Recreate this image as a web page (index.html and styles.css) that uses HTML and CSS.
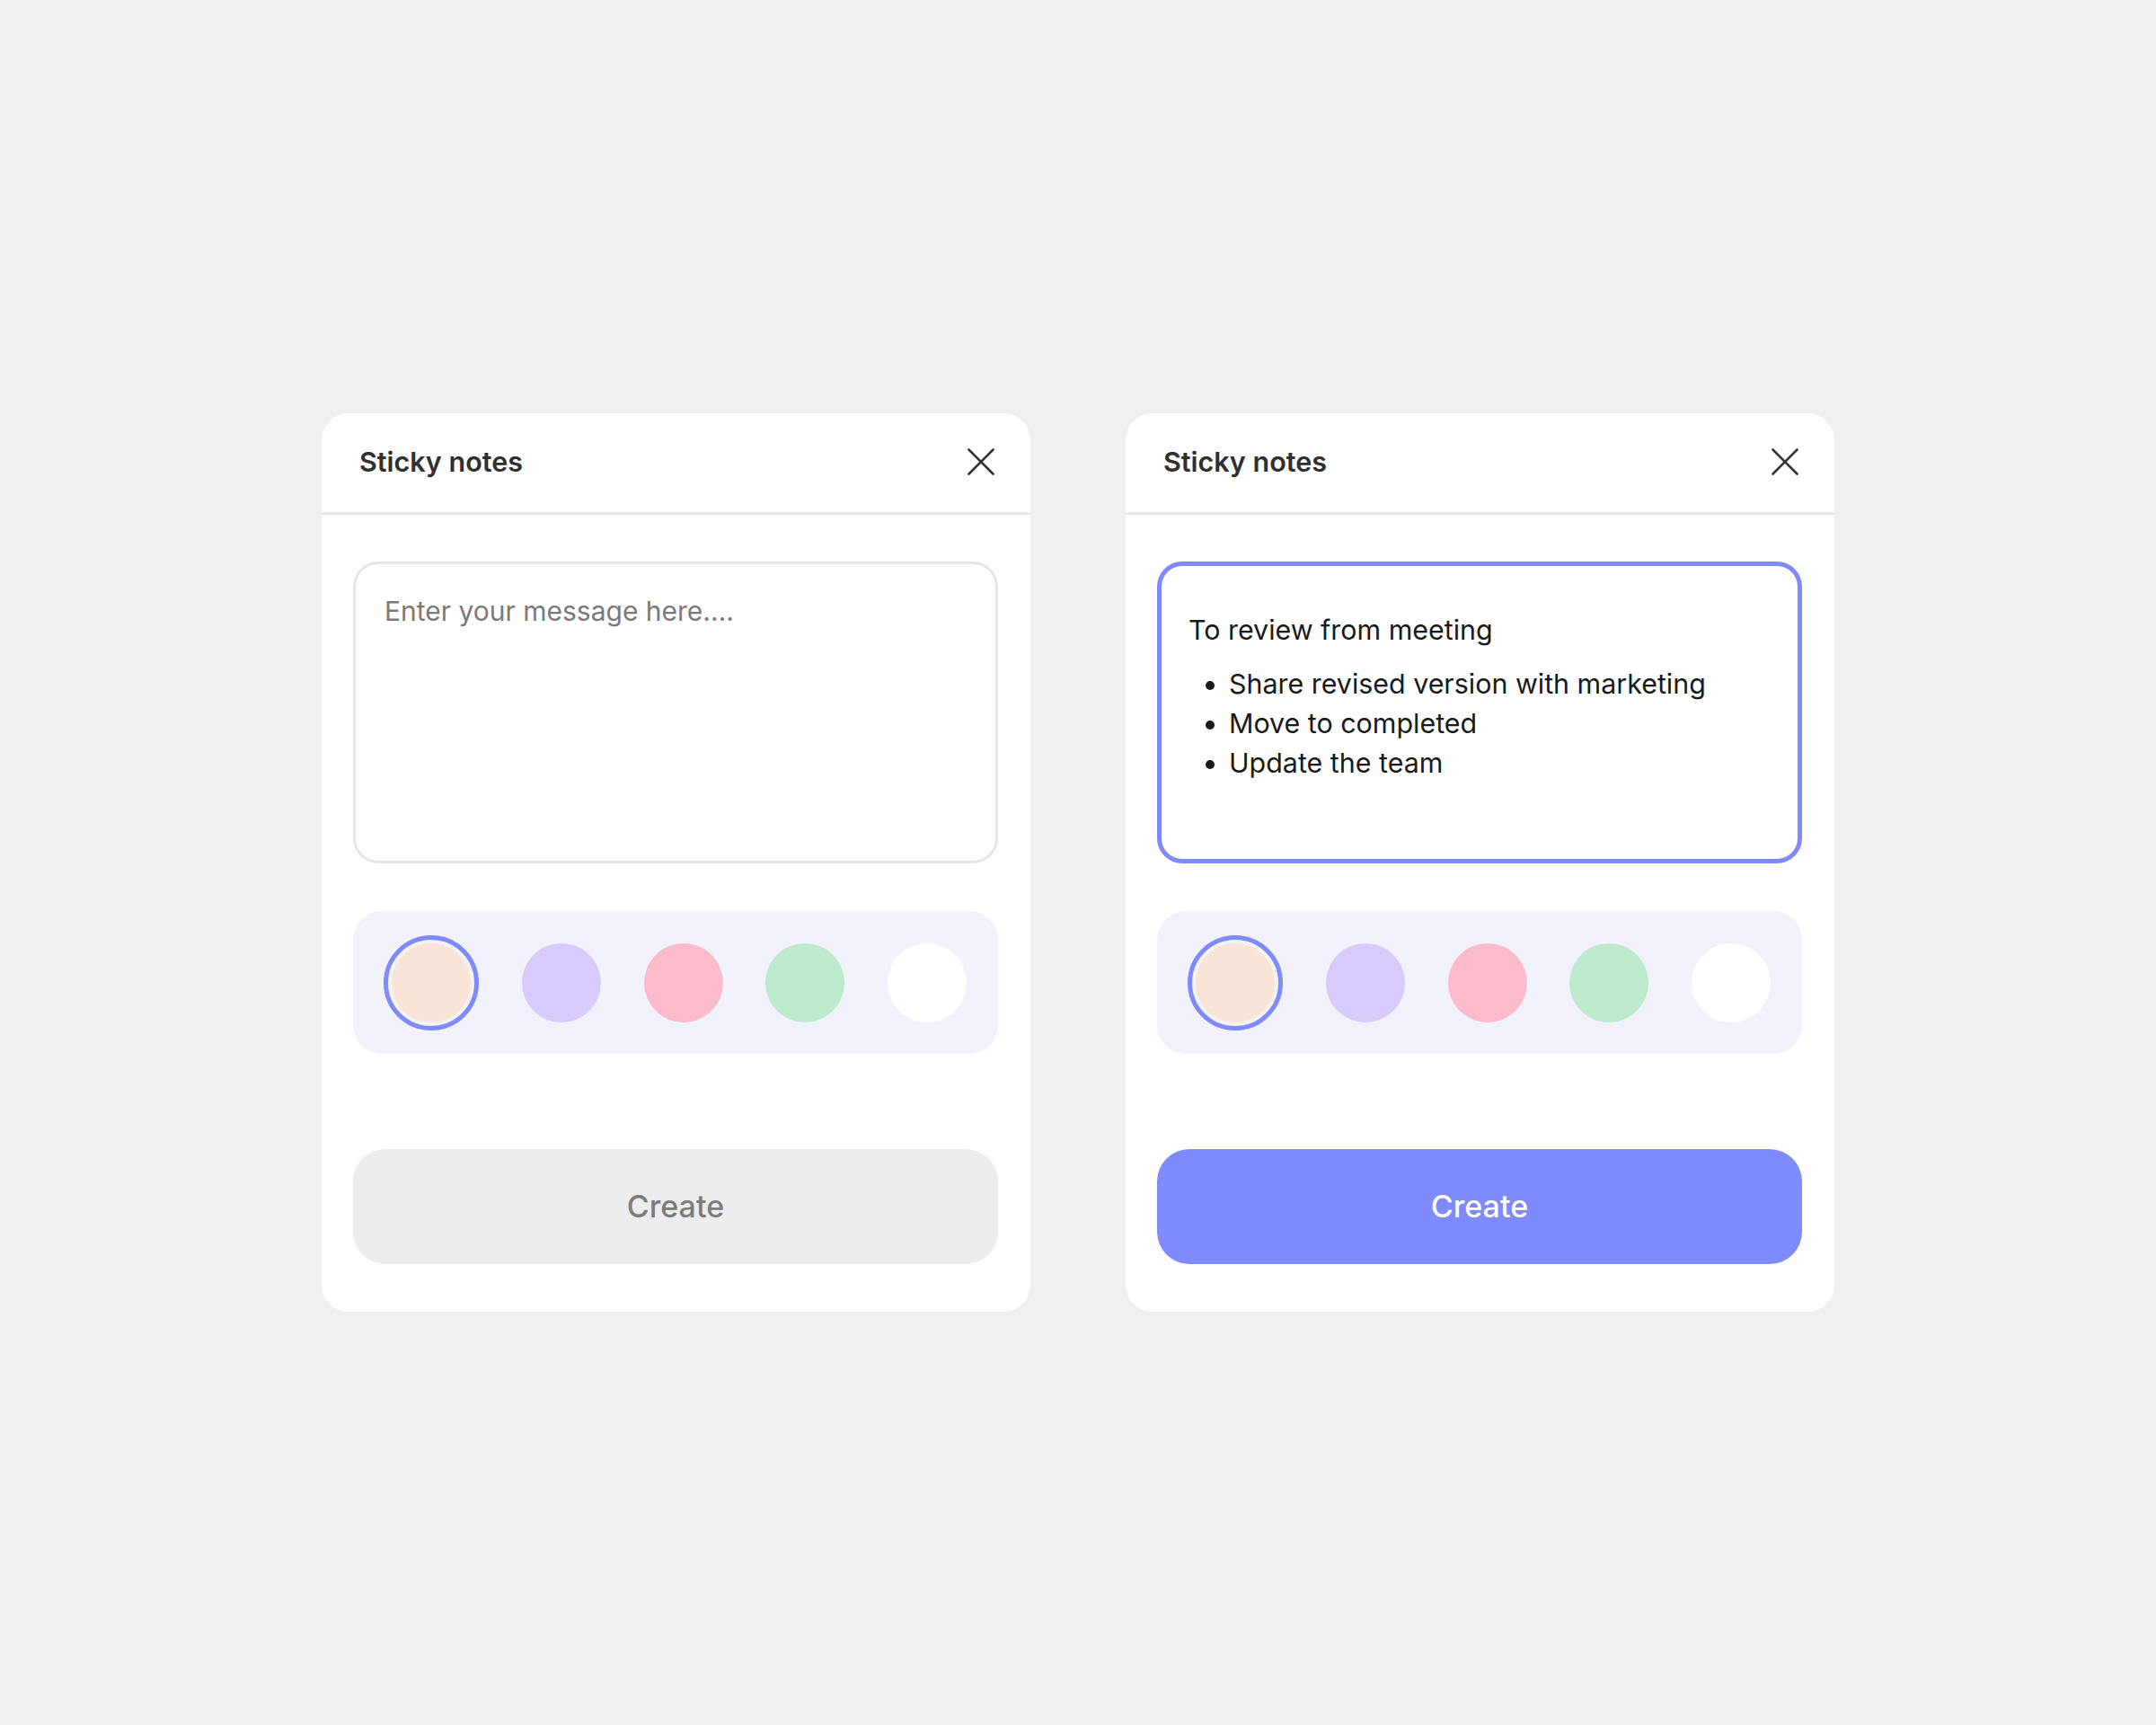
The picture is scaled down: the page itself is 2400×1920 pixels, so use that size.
FILE: index.html
```html
<!DOCTYPE html>
<html lang="en">
<head>
<meta charset="utf-8">
<title>Sticky notes</title>
<link rel="stylesheet" href="styles.css">
</head>
<body>
<main class="stage">
  <section class="card">
    <header class="card-header">
      <h2 class="card-title">Sticky notes</h2>
      <button class="close-btn" aria-label="Close">
        <svg viewBox="0 0 30 30" width="30" height="30"><path d="M1.5 1.5 L28.5 28.5 M28.5 1.5 L1.5 28.5" stroke="#333" stroke-width="2.6" stroke-linecap="round" fill="none"/></svg>
      </button>
    </header>
    <div class="card-body">
      <div class="note-input">
        <span class="placeholder">Enter your message here....</span>
      </div>
      <div class="swatches">
        <span class="swatch-ring"><span class="swatch peach"></span></span>
        <span class="swatch lavender"></span>
        <span class="swatch pink"></span>
        <span class="swatch mint"></span>
        <span class="swatch white"></span>
      </div>
      <button class="create-btn disabled">Create</button>
    </div>
  </section>

  <section class="card">
    <header class="card-header">
      <h2 class="card-title">Sticky notes</h2>
      <button class="close-btn" aria-label="Close">
        <svg viewBox="0 0 30 30" width="30" height="30"><path d="M1.5 1.5 L28.5 28.5 M28.5 1.5 L1.5 28.5" stroke="#333" stroke-width="2.6" stroke-linecap="round" fill="none"/></svg>
      </button>
    </header>
    <div class="card-body">
      <div class="note-input active">
        <p class="note-heading">To review from meeting</p>
        <ul class="note-list">
          <li>Share revised version with marketing</li>
          <li>Move to completed</li>
          <li>Update the team</li>
        </ul>
      </div>
      <div class="swatches">
        <span class="swatch-ring"><span class="swatch peach"></span></span>
        <span class="swatch lavender"></span>
        <span class="swatch pink"></span>
        <span class="swatch mint"></span>
        <span class="swatch white"></span>
      </div>
      <button class="create-btn primary">Create</button>
    </div>
  </section>
</main>
</body>
</html>
```

FILE: styles.css
```css
* { box-sizing: border-box; }

html, body {
  margin: 0;
  padding: 0;
}

body {
  background: #f0f0ef;
  font-family: "Inter", "Noto Sans", "Liberation Sans", sans-serif;
  color: #1a1a1a;
}

.stage {
  min-height: 1920px;
  display: flex;
  justify-content: center;
  align-items: center;
  gap: 106px;
}

.card {
  width: 789px;
  height: 1000px;
  background: #ffffff;
  border-radius: 30px;
  display: flex;
  flex-direction: column;
  overflow: hidden;
}

.card-header {
  height: 113px;
  flex: none;
  display: flex;
  align-items: center;
  justify-content: space-between;
  padding: 0 40px 3px 42px;
  border-bottom: 3px solid #e8e8e8;
}

.card-title {
  margin: 0;
  font-size: 30.5px;
  font-weight: 600;
  color: #303030;
  letter-spacing: 0;
}

.close-btn {
  border: 0;
  background: none;
  padding: 0;
  width: 30px;
  height: 30px;
  display: flex;
  cursor: pointer;
}

.card-body {
  flex: 1;
  display: flex;
  flex-direction: column;
  padding: 52px 36px 53px 35px;
}

.note-input {
  height: 336px;
  border: 3px solid #e6e6e6;
  border-radius: 28px;
  padding: 30px 32px;
  font-size: 30px;
  line-height: 44px;
}

.placeholder {
  color: #7a7a7a;
}

.note-input.active {
  border: 5px solid #7f8afc;
  padding: 49px 30px 20px 30px;
  color: #1a1a1a;
  font-size: 30.4px;
}

.note-heading {
  margin: 0 0 16px;
}

.note-list {
  margin: 0;
  padding-left: 45px;
}

.swatches {
  margin-top: 53px;
  height: 159px;
  background: #f1f2fc;
  border-radius: 32px;
  display: flex;
  align-items: center;
  justify-content: space-between;
  padding: 0 35px 0 34px;
}

.swatch {
  width: 88px;
  height: 88px;
  border-radius: 50%;
  display: block;
  flex: none;
}

.swatch-ring {
  width: 106px;
  height: 106px;
  border-radius: 50%;
  border: 5px solid #7f8afc;
  padding: 4px;
  background: #f3f3f3;
  display: block;
  flex: none;
}

.peach { background: #f9e4d7; }
.lavender { background: #d6cbfa; }
.pink { background: #fcbbcb; }
.mint { background: #bde9cd; }
.white { background: #ffffff; }

.create-btn {
  margin-top: auto;
  height: 128px;
  width: 100%;
  border: 0;
  border-radius: 36px;
  padding: 0 0 2px;
  font-family: "Inter", "Noto Sans", "Liberation Sans", sans-serif;
  font-size: 34px;
  font-weight: 500;
  cursor: pointer;
}

.create-btn.disabled {
  background: #ecedef;
  color: #7c7c7c;
}

.create-btn.primary {
  background: #7f8afc;
  color: #ffffff;
}
```
